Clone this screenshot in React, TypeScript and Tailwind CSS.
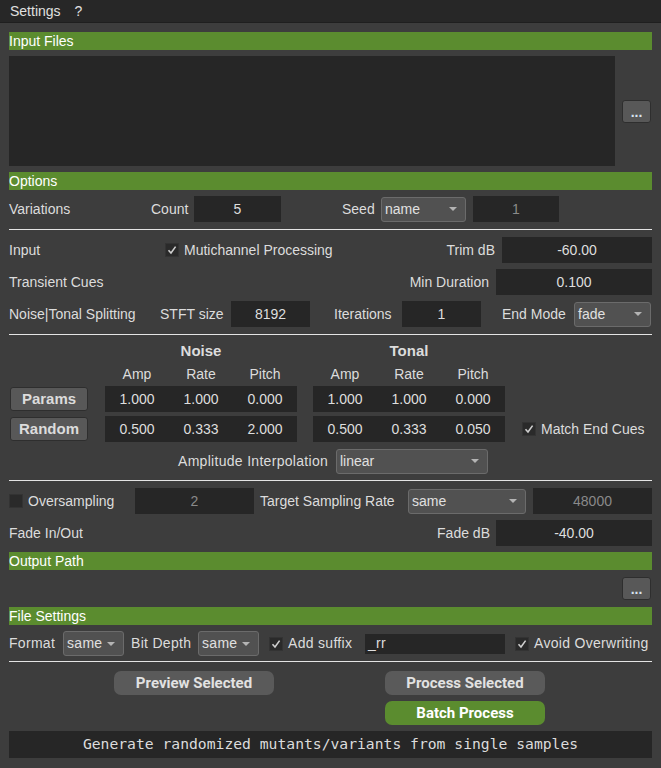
import type React from "react"

const font = { fontFamily: '"Liberation Sans", Arial, sans-serif' }

function SectionBar({ title }: { title: string }) {
  return <div className="h-[18px] bg-[#5b8c2f] text-[14px] leading-[18px] text-white">{title}</div>
}

function Separator({ className = "" }: { className?: string }) {
  return <div className={`h-px bg-[#e4e4e4] ${className}`} />
}

function Field({ value, className = "", dim = false }: { value: string; className?: string; dim?: boolean }) {
  return (
    <div
      className={`flex h-[26px] items-center justify-center bg-[#262626] text-[14px] ${
        dim ? "text-[#8a8a8a]" : "text-[#dedede]"
      } ${className}`}
    >
      {value}
    </div>
  )
}

function Select({ value, className = "" }: { value: string; className?: string }) {
  return (
    <div
      className={`flex h-[25px] items-center justify-between rounded-[3px] border border-[#6b6b6b] bg-[#515151] pl-[3px] pr-[8px] text-[14px] text-[#e0e0e0] ${className}`}
    >
      <span>{value}</span>
      <span className="h-0 w-0 border-x-[4px] border-t-[4px] border-x-transparent border-t-[#b4b4b4]" />
    </div>
  )
}

function Check({ checked }: { checked: boolean }) {
  return (
    <span className="flex h-[14px] w-[14px] items-center justify-center border border-[#333] bg-[#2a2a2a]">
      {checked && (
        <svg width="10" height="10" viewBox="0 0 10 10">
          <path d="M1.5 5.2 L4 8 L8.6 1.6" fill="none" stroke="#cfcfcf" strokeWidth="1.6" />
        </svg>
      )}
    </span>
  )
}

function DotsButton() {
  return (
    <div className="flex h-[23px] w-[29px] items-end justify-center rounded-[3px] border border-[#2e2e2e] bg-[#585858] pb-[5px] text-[14px] font-bold leading-[10px] text-[#d8e4ee]">
      ...
    </div>
  )
}

function SmallButton({ label }: { label: string }) {
  return (
    <div className="flex h-[24px] w-[78px] items-center justify-center rounded-[3px] border border-[#2e2e2e] bg-[#585858] text-[15px] font-bold text-[#dcdcdc]">
      {label}
    </div>
  )
}

function ValueBlock({ values }: { values: string[] }) {
  return (
    <div className="flex h-[26px] w-[192px] bg-[#262626] text-[14px] text-[#dedede]">
      {values.map((v, i) => (
        <span key={i} className="flex w-[64px] items-center justify-center">
          {v}
        </span>
      ))}
    </div>
  )
}

function Heads() {
  return (
    <div className="flex w-[192px]">
      {["Amp", "Rate", "Pitch"].map((h) => (
        <span key={h} className="w-[64px] text-center">
          {h}
        </span>
      ))}
    </div>
  )
}

function PillButton({ label, green = false }: { label: string; green?: boolean }) {
  return (
    <div
      className={`flex h-[24px] w-[160px] items-center justify-center rounded-[7px] text-[15px] font-bold ${
        green ? "bg-[#5b8c2f] text-white" : "bg-[#5a5a5a] text-[#e2e2e2]"
      }`}
      style={{ fontFamily: 'Roboto, "Liberation Sans", sans-serif' }}
    >
      {label}
    </div>
  )
}

export default function App() {
  return (
    <div className="h-[768px] w-[661px] overflow-hidden bg-[#3d3d3d] text-[14px] text-[#dcdcdc]" style={font}>
      {/* menu bar */}
      <div className="flex h-[23px] items-center border-b border-[#1f1f1f] bg-[#272727] pl-[10px] text-[14px] text-[#e0e0e0]">
        <span>Settings</span>
        <span className="ml-[14px]">?</span>
      </div>

      <div className="px-[9px] pt-[9px]">
        <SectionBar title="Input Files" />
        <div className="mt-[6px] flex h-[110px]">
          <div className="w-[606px] bg-[#262626]" />
          <div className="flex flex-1 items-center justify-end pr-[1px]">
            <DotsButton />
          </div>
        </div>

        <div className="mt-[6px]">
          <SectionBar title="Options" />
        </div>

        {/* variations */}
        <div className="mt-[6px] flex h-[26px] items-center">
          <span className="w-[142px]">Variations</span>
          <span className="w-[43px]">Count</span>
          <Field value="5" className="w-[87px]" />
          <span className="ml-[61px] w-[39px]">Seed</span>
          <Select value="name" className="w-[85px]" />
          <Field value="1" dim className="ml-[7px] w-[86px]" />
        </div>

        <Separator className="mt-[7px]" />

        {/* input */}
        <div className="mt-[7px] flex h-[26px] items-center">
          <span className="w-[156px]">Input</span>
          <Check checked />
          <span className="ml-[5px]">Mutichannel Processing</span>
          <span className="ml-auto mr-[7px]">Trim dB</span>
          <Field value="-60.00" className="w-[150px]" />
        </div>

        <div className="mt-[6px] flex h-[26px] items-center">
          <span>Transient Cues</span>
          <span className="ml-auto mr-[7px]">Min Duration</span>
          <Field value="0.100" className="w-[156px]" />
        </div>

        <div className="mt-[6px] flex h-[26px] items-center">
          <span className="w-[151px]">Noise|Tonal Splitting</span>
          <span className="w-[71px]">STFT size</span>
          <Field value="8192" className="w-[79px]" />
          <span className="ml-[24px] w-[68px]">Iterations</span>
          <Field value="1" className="w-[79px]" />
          <span className="ml-[21px] w-[72px]">End Mode</span>
          <Select value="fade" className="h-[24px] w-[77px]" />
        </div>

        <Separator className="mt-[7px]" />

        {/* noise / tonal params */}
        <div className="mt-[8px] flex h-[16px] items-center text-[15px] font-bold">
          <span className="ml-[96px] w-[192px] text-center">Noise</span>
          <span className="ml-[16px] w-[192px] text-center">Tonal</span>
        </div>
        <div className="mt-[7px] flex h-[16px] items-center">
          <span className="w-[96px]" />
          <Heads />
          <span className="w-[16px]" />
          <Heads />
        </div>
        <div className="mt-[4px] flex h-[26px] items-center">
          <span className="w-[96px] pl-[1px]">
            <SmallButton label="Params" />
          </span>
          <ValueBlock values={["1.000", "1.000", "0.000"]} />
          <span className="w-[16px]" />
          <ValueBlock values={["1.000", "1.000", "0.000"]} />
        </div>
        <div className="mt-[4px] flex h-[26px] items-center">
          <span className="w-[96px] pl-[1px]">
            <SmallButton label="Random" />
          </span>
          <ValueBlock values={["0.500", "0.333", "2.000"]} />
          <span className="w-[16px]" />
          <ValueBlock values={["0.500", "0.333", "0.050"]} />
          <span className="ml-[17px]">
            <Check checked />
          </span>
          <span className="ml-[5px]">Match End Cues</span>
        </div>

        <div className="mt-[7px] flex h-[24px] items-center">
          <span className="ml-[169px] w-[158px] tracking-[0.3px]">Amplitude Interpolation</span>
          <Select value="linear" className="h-[24px] w-[152px]" />
        </div>

        <Separator className="mt-[7px]" />

        {/* oversampling */}
        <div className="mt-[7px] flex h-[26px] items-center">
          <Check checked={false} />
          <span className="ml-[5px] w-[107px]">Oversampling</span>
          <Field value="2" dim className="w-[119px]" />
          <span className="ml-[6px] w-[148px]">Target Sampling Rate</span>
          <Select value="same" className="w-[118px]" />
          <Field value="48000" dim className="ml-[7px] w-[119px]" />
        </div>

        <div className="mt-[6px] flex h-[26px] items-center">
          <span>Fade In/Out</span>
          <span className="ml-auto mr-[6px]">Fade dB</span>
          <Field value="-40.00" className="w-[156px]" />
        </div>

        <div className="mt-[6px]">
          <SectionBar title="Output Path" />
        </div>
        <div className="flex h-[37px] items-center justify-end pr-[1px]">
          <DotsButton />
        </div>
        <SectionBar title="File Settings" />

        {/* file settings */}
        <div className="mt-[7px] flex h-[23px] items-center tracking-[0.3px]">
          <span className="w-[54px]">Format</span>
          <Select value="same" className="h-[23px] w-[61px]" />
          <span className="ml-[7px] w-[67px]">Bit Depth</span>
          <Select value="same" className="h-[23px] w-[61px]" />
          <span className="ml-[10px]">
            <Check checked />
          </span>
          <span className="ml-[5px] w-[77px]">Add suffix</span>
          <div className="flex h-[20px] w-[140px] items-center bg-[#262626] pl-[3px] text-[#dedede]">_rr</div>
          <span className="ml-[10px]">
            <Check checked />
          </span>
          <span className="ml-[5px]">Avoid Overwriting</span>
        </div>

        <Separator className="mt-[6px]" />

        {/* actions */}
        <div className="mt-[9px] flex">
          <div className="ml-[105px]">
            <PillButton label="Preview Selected" />
          </div>
          <div className="ml-[111px] flex flex-col gap-[6px]">
            <PillButton label="Process Selected" />
            <PillButton label="Batch Process" green />
          </div>
        </div>

        <div
          className="mt-[6px] flex h-[27px] items-center justify-center bg-[#262626] text-[14.7px] text-[#dcdcdc]"
          style={{ fontFamily: '"DejaVu Sans Mono", "Liberation Mono", monospace' }}
        >
          Generate randomized mutants/variants from single samples
        </div>
      </div>
    </div>
  )
}
